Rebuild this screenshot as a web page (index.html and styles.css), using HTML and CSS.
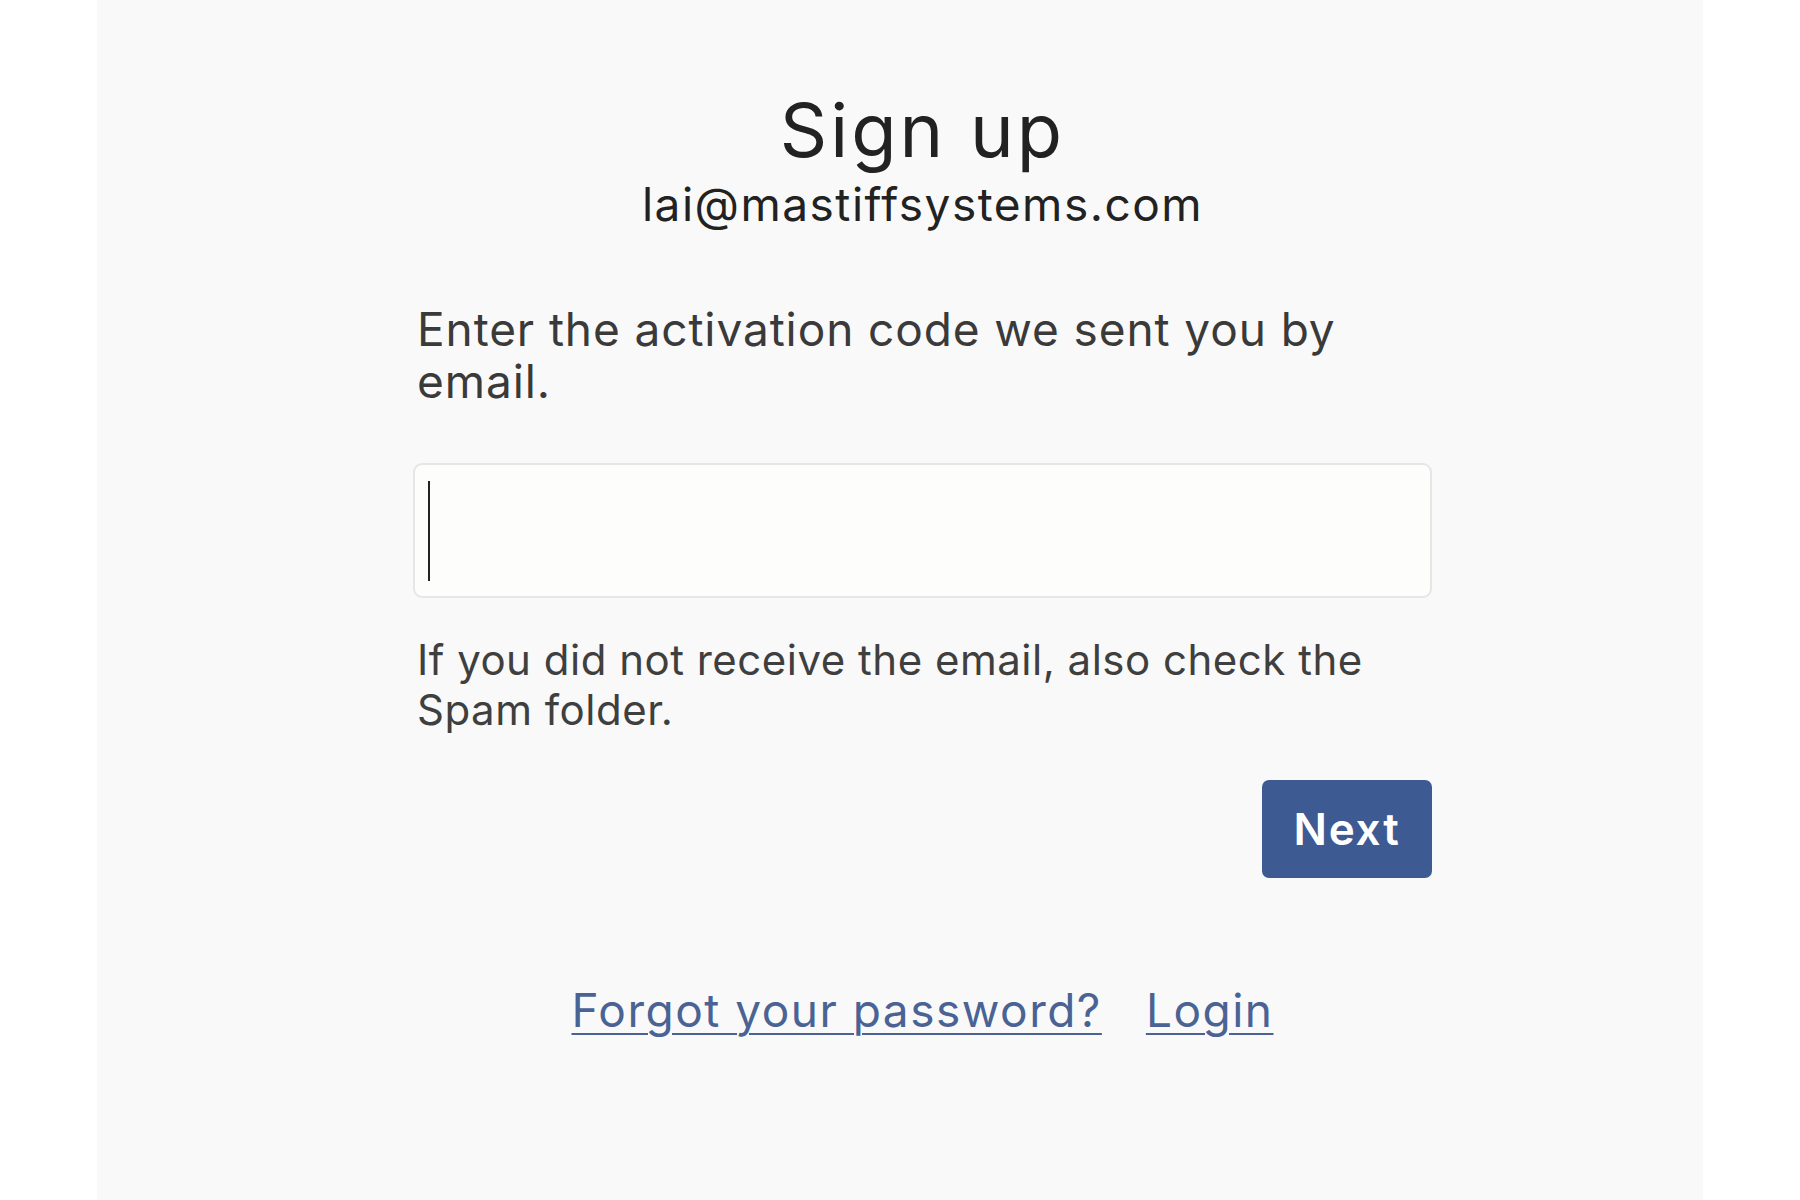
FILE: index.html
```html
<!DOCTYPE html>
<html lang="en">
<head>
<meta charset="utf-8">
<title>Sign up</title>
<link rel="stylesheet" href="styles.css">
</head>
<body>
<main class="panel">
  <section class="form">
    <h1 class="title">Sign up</h1>
    <div class="account">lai@mastiffsystems.com</div>
    <p class="intro">Enter the activation code we sent you by email.</p>
    <div class="field">
      <input class="code-input" type="text" aria-label="Activation code">
      <span class="caret"></span>
    </div>
    <p class="hint">If you did not receive the email, also check the Spam folder.</p>
    <div class="actions">
      <button class="next-btn" type="button">Next</button>
    </div>
    <nav class="links">
      <a href="#" class="link">Forgot your password?</a>
      <a href="#" class="link">Login</a>
    </nav>
  </section>
</main>
</body>
</html>
```

FILE: styles.css
```css
html, body {
  margin: 0;
  padding: 0;
  background: #ffffff;
}

body {
  font-family: Inter, "Open Sans", "Liberation Sans", sans-serif;
  color: #333333;
}

.panel {
  margin: 0 97px;
  min-height: 100vh;
  background: #f9f9f9;
  padding: 90px 271px 0 316px;
  box-sizing: border-box;
}

.form {
  width: 1019px;
  display: flex;
  flex-direction: column;
}

.title {
  margin: 0;
  font-size: 74px;
  line-height: 80px;
  font-weight: 400;
  letter-spacing: 3px;
  text-align: center;
  color: #222222;
}

.account {
  margin-top: 6px;
  font-size: 46px;
  line-height: 56px;
  letter-spacing: 1.5px;
  text-align: center;
  color: #222222;
}

.intro {
  margin: 71px 0 0;
  padding-left: 4px;
  font-size: 46px;
  line-height: 52px;
  letter-spacing: 0.9px;
  color: #3a3a3a;
}

.field {
  position: relative;
  margin-top: 56px;
}

.code-input {
  display: block;
  width: 100%;
  height: 135px;
  box-sizing: border-box;
  border: 2px solid #e6e6e6;
  border-radius: 9px;
  background: #fdfdfc;
  font: inherit;
  font-size: 44px;
  padding: 0 16px;
  outline: none;
  caret-color: transparent;
}

.caret {
  position: absolute;
  left: 15px;
  top: 18px;
  width: 2px;
  height: 100px;
  background: #222222;
}

.hint {
  margin: 37px 0 0;
  padding-left: 4px;
  font-size: 42px;
  line-height: 50px;
  letter-spacing: 0.5px;
  color: #3f3f3f;
}

.actions {
  display: flex;
  justify-content: flex-end;
  margin-top: 45px;
}

.next-btn {
  width: 170px;
  height: 98px;
  border: none;
  border-radius: 7px;
  background: #3d5a92;
  color: #ffffff;
  font-family: inherit;
  font-size: 44px;
  font-weight: 600;
  letter-spacing: 1.8px;
  padding: 0;
}

.links {
  display: flex;
  justify-content: center;
  gap: 44px;
  margin-top: 104px;
}

.link {
  font-size: 46px;
  line-height: 56px;
  letter-spacing: 1.5px;
  color: #4a6394;
  text-decoration: underline;
  text-decoration-thickness: 2px;
  text-underline-offset: 6px;
}
```
